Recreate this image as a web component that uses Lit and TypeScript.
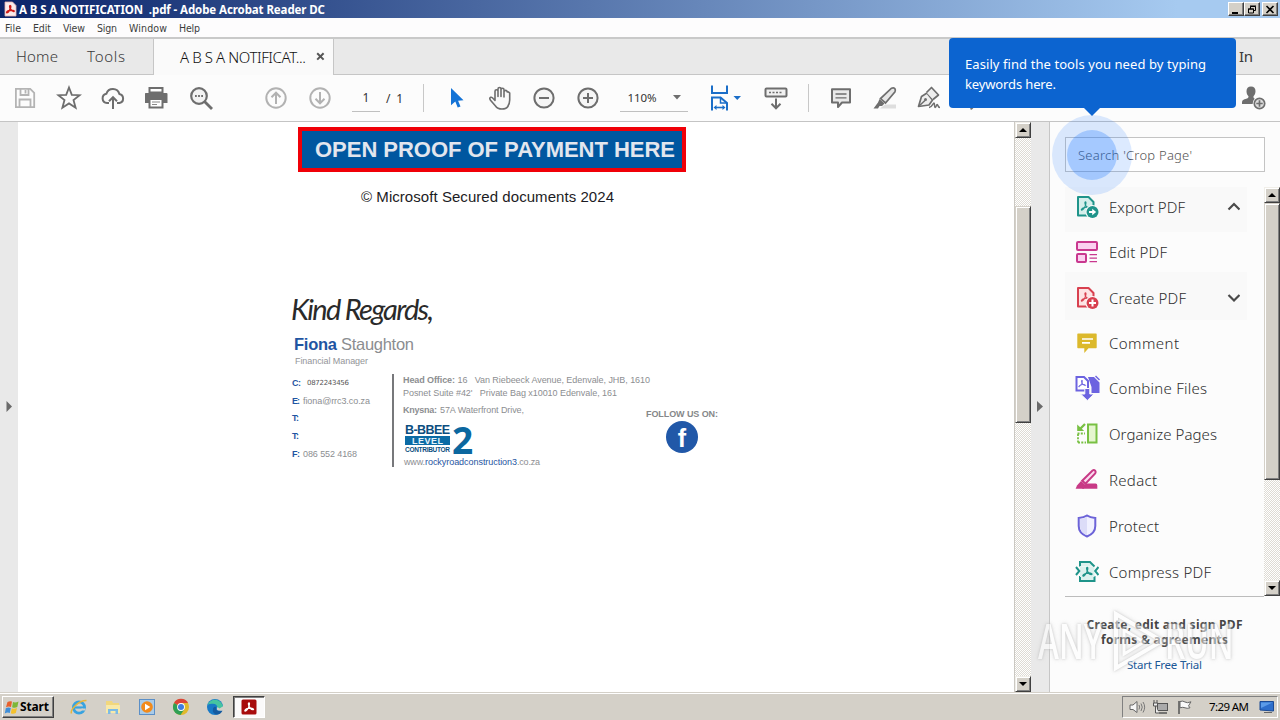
import { LitElement, html, css, svg } from "lit";
import { customElement, property } from "lit/decorators.js";

/** Single-line label whose tracking is spread so that it takes a given width. */
@customElement("fit-label")
class FitLabel extends LitElement {
  @property({ type: Number }) w = 0;
  @property() text = "";
  static styles = css`
    :host { display: inline-block; white-space: pre; flex: none; }
  `;
  render() {
    return html`<span>${this.text}</span>`;
  }
  updated() {
    const s = this.renderRoot.querySelector("span") as HTMLElement;
    s.style.letterSpacing = "0px";
    if (!this.w) return;
    const gap = (this.w - s.getBoundingClientRect().width) / Math.max(1, this.text.length - 1);
    s.style.letterSpacing = gap.toFixed(3) + "px";
    s.style.marginRight = (-gap).toFixed(3) + "px";
  }
}

const L = (text: string, w = 0, cls = "") => html`<fit-label class=${cls} .text=${text} .w=${w}></fit-label>`;

const ic = (w: number, h: number, body: unknown, cls = "") =>
  html`<svg class="ic ${cls}" width=${w} height=${h} viewBox="0 0 ${w} ${h}">${body}</svg>`;

const trefoil = (x: number, y: number, k: number, color: string, sw = 1.2) => svg`
  <g transform="translate(${x} ${y}) scale(${k})" fill="none" stroke=${color} stroke-width=${sw} stroke-linejoin="round">
    <path d="M5 0.8C4 0.8 4.4 3.2 5.2 4.6C6.2 6.4 8 7.8 9.3 7.6C10.3 7.2 8.6 6 6.2 6.2C4 6.3 1.2 7.4 0.8 8.7C0.9 9.9 3 8.6 4.3 6C5.3 4 6 0.9 5 0.8Z"/>
  </g>`;

const tb = {
  save: ic(24, 24, svg`<g fill="none" stroke="#b4b4b4" stroke-width="1.8"><path d="M2.9 2.9h14.3l4 4v14.3H2.9z"/><path d="M7.5 3v6h8V3M6.5 21v-7.500h11V21M12.500 4v3.500"/></g>`),
  star: ic(26, 26, svg`<path d="M13 2.500l2.800 7.300 7.800.4-6.100 4.900 2.100 7.600L13 18.400l-6.600 4.300 2.100-7.600-6.100-4.900 7.800-.4z" fill="none" stroke="#6e6e6e" stroke-width="1.800"/>`),
  cloud: ic(26, 26, svg`<g fill="none" stroke="#6e6e6e" stroke-width="2"><path d="M9 18H7a4.700 4.700 0 0 1-.6-9.300A6.800 6.800 0 0 1 19.400 9 4.600 4.600 0 0 1 19.500 18H17"/><path d="M13 24V12.500M9 16.200l4-4 4 4"/></g>`),
  print: ic(26, 26, svg`<path d="M5.500 3h13v4.500h-13z" fill="#fff" stroke="#6e6e6e" stroke-width="2"/><path d="M1.500 8h21q1 0 1 1v9h-4.500v-3.500h-14V18H1V9q0-1 .5-1z" fill="#6e6e6e"/><path d="M5.500 14h13V22.500h-13z" fill="#fff" stroke="#6e6e6e" stroke-width="2"/><path d="M8 17h8M8 19.500h5" stroke="#8a8a8a"/>`),
  find: ic(26, 26, svg`<circle cx="11" cy="11" r="7.800" fill="#f3f3f3" stroke="#6e6e6e" stroke-width="2.200"/><path d="M16.500 16.500l7.500 7.500" stroke="#6e6e6e" stroke-width="2.800"/><path d="M7 11h1.800M10.100 11h1.800M13.200 11h1.800" stroke="#6e6e6e" stroke-width="2"/>`),
  up: ic(24, 24, svg`<g fill="none" stroke="#b2b2b2" stroke-width="2"><circle cx="12" cy="12" r="9.700"/><path d="M12 18V7M7.500 11.200L12 6.700l4.500 4.500"/></g>`),
  down: ic(24, 24, svg`<g fill="none" stroke="#b2b2b2" stroke-width="2"><circle cx="12" cy="12" r="9.700"/><path d="M12 6v11M7.500 12.800l4.500 4.500 4.500-4.500"/></g>`),
  cursor: ic(24, 24, svg`<path d="M7 2v17.200l4.300-3.600 2.400 5.900 2.800-1-2.400-5.800 5.400-.5z" fill="#1473d6"/>`),
  hand: ic(26, 26, svg`<path d="M8 15.500V6.300a1.500 1.500 0 0 1 3 0V11.500V4a1.500 1.500 0 0 1 3 0V11.500V4.700a1.500 1.500 0 0 1 3 0V12V7a1.500 1.500 0 0 1 3.200 0q1.200-.6 2.500 1V15q0 4-2.200 7-1.500 2-5.500 2-4.500 0-6.500-3L3.500 15.200Q2 13 3.700 12.300q1.300-.4 2.500 1.200z" fill="#fafafa" stroke="#6e6e6e" stroke-width="1.600" stroke-linejoin="round"/>`),
  minus: ic(24, 24, svg`<circle cx="12" cy="12" r="9.600" fill="#f6f6f6" stroke="#6e6e6e" stroke-width="2"/><path d="M7 12h10" stroke="#6e6e6e" stroke-width="2"/>`),
  plus: ic(24, 24, svg`<circle cx="12" cy="12" r="9.600" fill="#f6f6f6" stroke="#6e6e6e" stroke-width="2"/><path d="M7 12h10M12 7v10" stroke="#6e6e6e" stroke-width="2"/>`),
  fit: ic(36, 26, svg`<g fill="none" stroke="#1b6ec8" stroke-width="2"><path d="M5 0.500V8h15V0.500"/><path d="M5 25.500V12.500h8.500L20 18v7.500"/><path d="M13.500 12.500V18H20" stroke-width="1.500"/><path d="M8 22.500h9" stroke-width="1.600"/></g><path d="M6.500 22.500l3-2.500v5zM18.500 22.500l-3-2.500v5z" fill="#1b6ec8"/><path d="M26.500 11h7.500l-3.750 4z" fill="#1b6ec8"/>`),
  keys: ic(26, 26, svg`<rect x="2.500" y="3.500" width="21" height="8" rx="1" fill="#f1f1f1" stroke="#6e6e6e" stroke-width="2"/><path d="M6 7.500h2M9.500 7.500h2M13 7.500h2M16.500 7.500h2" stroke="#6e6e6e" stroke-width="1.600"/><path d="M13 13.500V23M8.500 18.800l4.500 4.500 4.500-4.500" fill="none" stroke="#6e6e6e" stroke-width="2"/>`),
  note: ic(24, 24, svg`<path d="M3 3.200h18v13.300h-8l-4 4.500v-4.500H3z" fill="#e9e9e9" stroke="#6e6e6e" stroke-width="2" stroke-linejoin="round"/><path d="M6.500 8h11M6.500 11.800h11" stroke="#6e6e6e" stroke-width="1.300"/>`),
  marker: ic(26, 26, svg`<path d="M13 19.500h11v4H8z" fill="#dedede"/><path d="M19.500 3.200q2-1 3.300.3 1 1.500.2 3.200L13.500 18l-5-4.400z" fill="#e6e6e6" stroke="#6e6e6e" stroke-width="1.700"/><path d="M7.500 14l5 4.500-2.500 2.500H7.500L6 23.500H1.500L6 17.500z" fill="#6e6e6e"/>`),
  sign: ic(26, 26, svg`<path d="M2.500 21.500L5.500 11.500 11 8l5.500 7-3.500 5z" fill="#eee" stroke="#6e6e6e" stroke-width="1.700" stroke-linejoin="round"/><path d="M10.500 7.500l5-5 7 7.500-5.500 4.500" fill="#eee" stroke="#6e6e6e" stroke-width="1.700" stroke-linejoin="round"/><path d="M2.500 21.500l6.500-6" stroke="#6e6e6e" stroke-width="1.500"/><circle cx="9.500" cy="14.500" r="1.500" fill="#6e6e6e"/><path d="M13 22.500c3 0 4-4.500 5-4.500s0 4.500 1.200 4.500 1-3 2-3 .3 3 2.800 3" fill="none" stroke="#6e6e6e" stroke-width="1.500"/>`),
  more: ic(26, 26, svg`<path d="M13 4v17q0 2-2.500 3" fill="none" stroke="#6e6e6e" stroke-width="2"/>`),
  person: ic(28, 26, svg`<path d="M10 1.500c3 0 4.500 2 4.500 4.800 0 2-.9 4-2 5 0 2 .3 2.200 3.500 3.500v4.200H1c0-3.500.5-4 3.500-4.900 2.500-.7 3-1.200 3-2.800-1.200-1-2-3-2-5C5.500 3.500 7 1.500 10 1.500z" fill="#6e6e6e"/><circle cx="18.500" cy="18.500" r="6.800" fill="#fafafa"/><circle cx="18.500" cy="18.500" r="5.200" fill="#ddd" stroke="#6e6e6e" stroke-width="1.700"/><path d="M15.300 18.500h6.400M18.500 15.300v6.400" stroke="#6e6e6e" stroke-width="1.700"/>`),
};

const page = (c: string, f: string, badge: unknown) =>
  ic(24, 26, svg`<path d="M3 3h10.500l5 5V21.500H3z" fill=${f} stroke=${c} stroke-width="2" stroke-linejoin="round"/>${trefoil(5.5, 7, 1, c, 1.1)}<circle cx="17.500" cy="18" r="7" fill="#fafafa"/><circle cx="17.500" cy="18" r="6" fill=${c}/>${badge}`);

const tools = [
  { n: "Export PDF", w: 76, open: "up", i: page("#1f948a", "#d5efeb", svg`<path d="M14 18h4" stroke="#fff" stroke-width="2"/><path d="M17.200 14.800l4 3.200-4 3.200z" fill="#fff"/>`) },
  { n: "Edit PDF", w: 58, i: ic(24, 26, svg`<g fill="#fbd0f0" stroke="#c9388f" stroke-width="2"><rect x="2" y="3" width="20" height="8" rx="1"/><rect x="2" y="15" width="9" height="8" rx="1"/></g><path d="M14.500 15.700H22M14.500 19.200H22M14.500 22.700H22" stroke="#c9388f" stroke-width="1.300"/>`) },
  { n: "Create PDF", w: 77, open: "down", i: page("#d8404f", "#fde3e3", svg`<path d="M14 18h7M17.500 14.500v7" stroke="#fff" stroke-width="2"/>`) },
  { n: "Comment", w: 70, i: ic(24, 26, svg`<path d="M3 3.500h18q.7 0 .7.700v13.300q0 .7-.7.700h-7.500L9.300 23v-4.800H3q-.7 0-.7-.7V4.200q0-.7.7-.7z" fill="#dcb92c"/><path d="M7 9h11M7 12.800h8" stroke="#fff" stroke-width="1.700"/>`) },
  { n: "Combine Files", w: 98, i: ic(26, 26, svg`<path d="M13 2h6l5.500 5.500V18h-8v-6z" fill="#6c63e0"/><path d="M20.500 1l4 4" stroke="#6c63e0" stroke-width="1.500"/><path d="M1.500 2h7.500l4 4v9.500H1.500z" fill="#fff" stroke="#6c63e0" stroke-width="2"/>${trefoil(3, 4.500, 0.800, "#6c63e0", 1.200)}<path d="M9.800 13.500h5V19h4.200l-6.700 6.500L5.600 19h4.200z" fill="#6c63e0" stroke="#fafafa" stroke-width="1"/>`) },
  { n: "Organize Pages", w: 108, i: ic(24, 26, svg`<rect x="13" y="3.500" width="8.500" height="18" fill="#e5f6cf" stroke="#78c043" stroke-width="2"/><path d="M2.500 12.500H10M3 13v8.500M3 21.500H11" stroke="#78c043" stroke-width="1.800" stroke-dasharray="2 1.300" fill="none"/><path d="M10 3l-5 5" stroke="#78c043" stroke-width="2.300"/><path d="M2.200 3.500v6.500h7z" fill="#78c043"/>`) },
  { n: "Redact", w: 48, i: ic(24, 26, svg`<path d="M11 16.500h9.500q1.800 0 1.800 2v3.300H7z" fill="#c83a86"/><path d="M17.500 3.500q1.500-.9 2.700.2 1 1.300 0 2.700L10.500 16.600l-3.300-2.800z" fill="#fbdcf0" stroke="#c83a86" stroke-width="2"/><path d="M6 14l4.500 4-1.700 3.800H0.600L2 18.500z" fill="#c83a86"/>`) },
  { n: "Protect", w: 50, i: ic(24, 26, svg`<path d="M12 2.500c2.500 1.800 5 2.300 8.300 2.500V13c0 5-3.300 8.500-8.300 10.500C7 21.500 3.700 18 3.700 13V5C7 4.800 9.500 4.300 12 2.500z" fill="#f1f1ff" stroke="#6c63d8" stroke-width="2"/><path d="M12 4c-2 1.300-4.300 1.800-7 2V13c0 4 2.500 7.300 7 9.300z" fill="#dcdcf8"/>`) },
  { n: "Compress PDF", w: 102, i: ic(24, 26, svg`<path d="M5 7.500V3h10l4.500 4.500M5 17v5h14.500v-5" fill="#dcf1ee" stroke="#1f948a" stroke-width="2"/><path d="M5 7h1.500v11H5zM6 7l13.500 1v10H6z" fill="#dcf1ee"/>${trefoil(7, 7.500, 1.050, "#1f948a", 1.200)}<path d="M1 8l3.300 4L1 16M23.500 8l-3.300 4 3.300 4" fill="none" stroke="#1f948a" stroke-width="2"/>`) },
];

const sbArrow = (dir: string) =>
  html`<div class="sbb">${ic(8, 4, dir === "up" ? svg`<path d="M0 4h8L4 0z"/>` : svg`<path d="M0 0h8L4 4z"/>`)}</div>`;

@customElement("app-root")
class AppRoot extends LitElement {
  static styles = css`
    :host { display: block; width: 1280px; height: 720px; overflow: hidden; position: relative; background: #fafafa;
      font-family: "Noto Sans", "Open Sans", sans-serif; color: #333; }
    * { box-sizing: border-box; }
    .app { display: flex; flex-direction: column; height: 720px; }
    .ic { display: block; flex: none; }
    .row { display: flex; align-items: center; }

    .title { height: 18px; background: linear-gradient(90deg, #0a246a, #a6caf0 92%); color: #fff; padding: 0 2px 0 3px;
      font: bold 11.500px/17px "Noto Sans", sans-serif; gap: 2px; }
    .grow { flex: 1; }
    .winbtn { width: 16px; height: 14px; background: #d4d0c8; border: 1px solid; border-color: #fff #404040 #404040 #fff;
      box-shadow: inset -1px -1px #808080; display: grid; place-items: center; }
    .winbtn.mid { margin-left: -2px; }

    .menu { height: 19px; background: #fdfcfd; font: 10.500px/19px "DejaVu Sans Condensed", "Noto Sans", sans-serif; padding: 2px 0 0 5px; gap: 12px; color: #3c3c3c; }
    .tabs { height: 38px; background: #e9e9e9; border-top: 2px solid #c9c9c9; border-bottom: 1px solid #c6c6c6; display: flex; align-items: stretch;
      font-weight: 300; font-size: 15px; line-height: 35px; color: #3a3a3a; }
    .tabs .home { padding-left: 16px; width: 87px; }
    .tabs .tools { width: 67px; border-right: 1px solid #c6c6c6; }
    .tab { display: flex; width: 180px; background: #fafafa; margin-bottom: -1px; border-right: 1px solid #c6c6c6; padding: 0 0 0 26px; align-items: center; gap: 10px; }
    .tab .ttl { color: #111; }
    .tab .ic { margin-bottom: 1px; }
    .signin { padding-right: 27px; font-weight: 400; }

    .bar { height: 47px; background: #fcfcfc; border-bottom: 1px solid #c4c4c4; padding: 0 0 0 3px; font-size: 12px; }
    .cell { width: 44px; display: grid; place-items: center; flex: none; }
    .g31 { width: 31px; flex: none; }
    .field { height: 28px; border-bottom: 1px solid #c0c0c0; display: flex; align-items: center; justify-content: center; flex: none; }
    .pg { width: 28px; margin-left: 10px; }
    .of { margin-left: 6px; width: 17px; }
    .sep { width: 1px; height: 28px; background: #c8c8c8; flex: none; }
    .s1 { margin: 0 10px 0 20px; }
    .s2 { margin: 0 10px 0 10px; }
    .zoom { width: 68px; margin: 0 19px 0 10px; gap: 16px; font-size: 11.500px; }
    .fitc { width: 36px; margin-right: 11px; }
    .person { margin-right: 11px; }

    .main { height: 571px; flex: none; display: flex; }
    .ls, .rs { width: 18px; background: #e9e9e9; display: grid; place-items: center; padding-bottom: 2px; }
    .sb { width: 17px; flex: none; display: flex; flex-direction: column; border-left: 1px solid #cbc8c2;
      background: conic-gradient(#fff 25%, #dedbd4 0 50%, #fff 0 75%, #dedbd4 0) 0 0/2px 2px; }
    .sbb { height: 16px; background: #d4d0c8; border: 1px solid; border-color: #f1efe9 #404040 #404040 #f1efe9;
      box-shadow: inset 1px 1px #fff, inset -1px -1px #808080; display: grid; place-items: center; flex: none; }
    .thumb { background: #d4d0c8; border: 1px solid; border-color: #d4d0c8 #404040 #404040 #d4d0c8; box-shadow: inset 1px 1px #fff, inset -1px -1px #808080; }
    .doc-sb { padding-bottom: 1px; }
    .doc-thumb { margin-top: 68px; height: 217px; }
    .panel-thumb { height: 277px; }

    .doc { width: 996px; background: #fff; font-family: "Liberation Sans", Arial, sans-serif; padding: 5px 0 0 272px; }
    .cta { margin-left: 8px; width: 388px; height: 45px; background: #0057a0; border: 4px solid #f00008; color: #e2e6ee; font-weight: bold; font-size: 22px; line-height: 37px; padding-left: 13px; }
    .cap { margin: 16px 0 0 71px; font-size: 15px; line-height: 18px; color: #1c1c24; }
    .script { margin: 79px 0 0 1px; height: 46px; font: italic 400 29px/48px Lato, cursive; color: #2a2a2a; }
    .name { margin: 3px 0 0 4px; font-size: 16.500px; line-height: 20px; color: #8b8d90; gap: 4px; }
    .blue { color: #1f55a2; }
    .b { font-weight: bold; }
    .role { margin: 1px 0 0 5px; font-size: 9px; line-height: 12px; color: #939598; }
    .info { display: flex; margin-top: 7px; font-size: 9px; color: #8c8e91; height: 94px; }
    .c1 { width: 104px; height: 93px; border-right: 2px solid #77787b; padding-left: 2px; }
    .c1 .row { height: 17.700px; gap: 3px; }
    .c1 .num { font-family: "DejaVu Sans"; font-size: 7px; color: #555; padding-left: 3px; }
    .c2 { width: 251px; padding-left: 9px; line-height: 12px; }
    .c2 .row { height: 12.500px; }
    .c2 .kn { margin: 5px 0 7px; gap: 3px; }
    .bbbee { display: flex; gap: 2px; height: 32px; color: #0b4e80; margin-left: 2px; }
    .bb { display: flex; flex-direction: column; width: 45px; }
    .bb1 { font: bold 12.500px/12px "Liberation Sans"; height: 12px; }
    .bb2 { background: #0b6ba5; color: #e8f4fa; font: bold 9px/10px "Liberation Sans"; text-align: center; height: 9px; }
    .bb3 { font: bold 6.500px/8px "Liberation Sans"; margin-top: 1px; }
    .two { font: bold 37px/31px "Open Sans", sans-serif; color: #0b679f; }
    .url { margin-left: 1px; }
    .follow { padding-top: 34px; width: 74px; display: flex; flex-direction: column; align-items: center; }
    .follow .cap2 { line-height: 13px; color: #858789; }
    .fb { width: 32px; height: 32px; border-radius: 50%; background: #2158a8; color: #fff; text-align: center; font: bold 25px/34px "Liberation Sans", sans-serif; }

    .panel { width: 231px; border-left: 1px solid #c6c6c6; padding-left: 15px; background: #fcfcfc; }
    .search { margin-top: 15px; width: 200px; height: 35px; border: 1px solid #c4c4c4; background: #fff; font-size: 13px; font-weight: 300; color: #555; line-height: 34px; padding-left: 12px; }
    .lists { display: flex; margin-top: 15px; height: 410px; }
    .list { width: 199px; border-bottom: 1px solid #bcbcbc; overflow: hidden; }
    .tool { width: 182px; height: 46px; padding-left: 10px; gap: 8px; font-size: 15px; font-weight: 300; line-height: 20px; color: #2e2e2e; }
    .tool .ic:first-child { margin-right: 2px; }
    .tool .ic[width="26"] { margin-right: 0; }
    .tool .lab { width: 109px; }
    .t0 { height: 45px; padding-bottom: 5px; }
    .t1 { height: 40px; }
    .t2 { height: 48px; padding-top: 3px; }
    .t3 { height: 45px; }
    .shade { background: #f9f9f9; }
    .sb.ps { width: 16px; height: 409px; border-left: 0; }
    .foot { width: 199px; display: flex; flex-direction: column; align-items: center; padding-top: 20px; font: bold 12px/15px "Noto Sans"; color: #444; }
    .trial { margin-top: 10px; font-weight: 400; font-size: 11.500px; color: #1a5796; }

    .tip { position: absolute; left: 949px; top: 38px; width: 287px; height: 70px; background: #0c64d0; border-radius: 4px; color: #fff; padding: 16px; font-size: 13px; line-height: 20px; display: flex; flex-direction: column; align-items: flex-start; }
    .tipa { position: absolute; left: 1083px; top: 107px; }
    .halo { position: absolute; left: 1052px; top: 115px; width: 80px; height: 80px; border-radius: 50%; background: rgba(20, 115, 255, .15); }
    .dot { position: absolute; left: 1067px; top: 130px; width: 50px; height: 50px; border-radius: 50%; background: rgba(20, 115, 255, .27); }
    .wm { position: absolute; left: 1038px; top: 607px; display: flex; align-items: center; opacity: .55; color: #fff; height: 68px;
      font: 600 48px/68px "Open Sans"; filter: drop-shadow(0 0 1px #aaa) drop-shadow(0 0 2px #ccc); }
    .any { width: 66px; } .run { width: 64px; margin-left: -5px; }
    .sq { display: block; transform: scaleX(.66); transform-origin: 0 50%; white-space: pre; }

    .task { height: 27px; background: #d4d0c8; border-top: 1px solid #fff; box-shadow: 0 -1px #d4d0c8; padding: 0 2px 1px 2px; }
    .start { width: 52px; height: 22px; border: 1px solid; border-color: #fff #404040 #404040 #fff; box-shadow: inset -1px -1px #808080; padding-left: 1px; font: bold 12px/18px "Noto Sans"; color: #000; gap: 0; margin-right: 8px; }
    .q { width: 34px; display: grid; place-items: center; }
    .q.on { width: 32px; height: 22px; background: #fbfafa; border: 1px solid; border-color: #404040 #fff #fff #404040; margin-left: 1px; box-shadow: inset 1px 1px #808080; }
    .tray { width: 156px; height: 22px; border: 1px solid; border-color: #808080 #fff #fff #808080; padding-left: 5px; color: #000; font: 11.500px/20px "Noto Sans"; }
    .tray .ic { margin-right: 6px; }
    .tray .mon { margin: 0 0 0 10px; }
    .clock { margin-left: 9px; }
  `;

  render() {
    return html`
      <div class="app">
        <div class="title row">
          ${ic(14, 16, svg`<path d="M2 1h7.500L13 4.500V15H2z" fill="#fbeceb" stroke="#e9b4b0" stroke-width=".8"/>${trefoil(3, 4, 0.850, "#d01b16", 1.900)}`)}
          ${L("A B S A NOTIFICATION  .pdf - Adobe Acrobat Reader DC", 306)}
          <span class="grow"></span>
          <div class="winbtn">${ic(10, 9, svg`<path d="M1 7h6v2H1z"/>`)}</div>
          <div class="winbtn mid">${ic(10, 9, svg`<path d="M3.500 4V1.500h5v4H7M3 1h6" fill="none" stroke="#000"/><path d="M1.500 4h5v4h-5zM1 4h6" fill="none" stroke="#000"/>`)}</div>
          <div class="winbtn">${ic(10, 9, svg`<path d="M1.500 1l7 7M8.500 1l-7 7" stroke="#000" stroke-width="1.600"/>`)}</div>
        </div>
        <div class="menu row">
          ${L("File", 16)}${L("Edit", 18)}${L("View", 22)}${L("Sign", 20)}${L("Window", 38)}${L("Help", 21)}
        </div>
        <div class="tabs">
          <div class="home">${L("Home", 42)}</div>
          <div class="tools">${L("Tools", 38)}</div>
          <div class="tab">${L("A B S A NOTIFICAT...", 126, "ttl")}${ic(9, 9, svg`<path d="M1.200 1.200l6.400 6.400M7.600 1.200L1.200 7.600" stroke="#555" stroke-width="2"/>`)}</div>
          <span class="grow"></span>
          <div class="signin">${L("Sign In", 46)}</div>
        </div>
        <div class="bar row">
          ${[tb.save, tb.star, tb.cloud, tb.print, tb.find].map((i) => html`<div class="cell">${i}</div>`)}
          <span class="g31"></span>
          <div class="cell">${tb.up}</div><div class="cell">${tb.down}</div>
          <div class="field pg">1</div><div class="of">${L("/ 1", 17)}</div>
          <span class="sep s1"></span>
          ${[tb.cursor, tb.hand, tb.minus, tb.plus].map((i) => html`<div class="cell">${i}</div>`)}
          <div class="field zoom">${L("110%", 29)}${ic(8, 5, svg`<path d="M0 0h8L4 4.500z" fill="#6e6e6e"/>`)}</div>
          <div class="fitc">${tb.fit}</div>
          <div class="cell">${tb.keys}</div>
          <span class="sep s2"></span>
          ${[tb.note, tb.marker, tb.sign, tb.more].map((i) => html`<div class="cell">${i}</div>`)}
          <span class="grow"></span>
          <div class="person">${tb.person}</div>
        </div>
        <div class="main">
          <div class="ls">${ic(7, 11, svg`<path d="M0.500 0v11L6 5.500z" fill="#6a6a6a"/>`)}</div>
          <div class="doc">
            <div class="cta">${L("OPEN PROOF OF PAYMENT HERE", 360)}</div>
            <div class="cap">${L("© Microsoft Secured documents 2024", 253)}</div>
            <div class="script">${L("Kind Regards,", 143)}</div>
            <div class="name row">${L("Fiona", 43, "b blue")}${L("Staughton", 73)}</div>
            <div class="role">${L("Financial Manager", 73)}</div>
            <div class="info">
              <div class="c1">
                <div class="row">${L("C:", 9, "b blue")}${L("0872243456", 42, "num")}</div>
                <div class="row">${L("E:", 8, "b blue")}${L("fiona@rrc3.co.za", 67)}</div>
                <div class="row">${L("T:", 7, "b blue")}</div>
                <div class="row">${L("T:", 7, "b blue")}</div>
                <div class="row">${L("F:", 8, "b blue")}${L("086 552 4168", 54)}</div>
              </div>
              <div class="c2">
                <div class="row">${L("Head Office:", 52, "b")}${L(" 16   Van Riebeeck Avenue, Edenvale, JHB, 1610", 195)}</div>
                <div class="row">${L("Posnet Suite #42'   Private Bag x10010 Edenvale, 161", 214)}</div>
                <div class="row kn">${L("Knysna:", 34, "b")}${L("57A Waterfront Drive,", 84)}</div>
                <div class="bbbee">
                  <div class="bb">
                    <div class="bb1">${L("B-BBEE", 45)}</div>
                    <div class="bb2">${L("LEVEL", 31)}</div>
                    <div class="bb3">${L("CONTRIBUTOR", 45)}</div>
                  </div>
                  <div class="two">2</div>
                </div>
                <div class="row url">${L("www.", 21)}${L("rockyroadconstruction3", 92, "blue")}${L(".co.za", 23)}</div>
              </div>
              <div class="follow"><div class="cap2">${L("FOLLOW US ON:", 72, "b")}</div><div class="fb">f</div></div>
            </div>
          </div>
          <div class="sb doc-sb">${sbArrow("up")}<div class="thumb doc-thumb"></div><span class="grow"></span>${sbArrow("down")}</div>
          <div class="rs">${ic(7, 11, svg`<path d="M0 0v11L6 5.500z" fill="#6a6a6a"/>`)}</div>
          <div class="panel">
            <div class="search">${L("Search 'Crop Page'", 114)}</div>
            <div class="lists">
              <div class="list">
                ${tools.map((t, k) => html`<div class="tool row t${k} ${t.open ? "shade" : ""}">${t.i}<div class="lab">${L(t.n, t.w)}</div>
                  ${t.open ? ic(14, 10, t.open === "up" ? svg`<path d="M2.500 7.500L8 2l5.500 5.500" fill="none" stroke="#4a4a4a" stroke-width="2.200"/>` : svg`<path d="M2.500 2L8 7.500 13.500 2" fill="none" stroke="#4a4a4a" stroke-width="2.200"/>`) : ""}</div>`)}
              </div>
              <div class="sb ps">${sbArrow("up")}<div class="thumb panel-thumb"></div><span class="grow"></span>${sbArrow("down")}</div>
            </div>
            <div class="foot">${L("Create, edit and sign PDF", 156)}${L("forms & agreements", 127)}${L("Start Free Trial", 75, "trial")}</div>
          </div>
        </div>
        <div class="task row">
          <div class="start row">${ic(16, 16, svg`<path d="M3.500 3q2.500-1.500 4.500-.4L7 8Q4.500 7 2 8.300z" fill="#e8602c"/><path d="M9 3q2.500 1 5.500-.6L13.300 8q-2.500 1.400-5.200.2z" fill="#7db738"/><path d="M1.800 9.200Q4.300 8 6.800 9l-1 5q-2.300-1-5 .4z" fill="#3f8ed8"/><path d="M7.800 9.200q2.500 1.200 5.200-.1l-1.200 5q-2.500 1.400-5 .2z" fill="#f4c12d"/>`)}${L("Start", 29)}</div>
          <div class="q">${ic(18, 18, svg`<circle cx="9" cy="9.500" r="5.600" fill="none" stroke="#38a3e0" stroke-width="2.800"/><path d="M4.500 9.500h10" stroke="#38a3e0" stroke-width="2.200"/><path d="M11.500 11.500h4" stroke="#d4d0c8" stroke-width="2"/><path d="M1.500 15.500C0 12 8 2.500 16.500 2.500" fill="none" stroke="#e7b63b" stroke-width="1.500"/>`)}</div>
          <div class="q">${ic(18, 18, svg`<path d="M2 3h6l1 2h6v9H2z" fill="#f1d77d"/><path d="M2 7h14v8H2z" fill="#f8e9a8"/><path d="M4 16v-5h10v5h-2.500v-3h-5v3z" fill="#7cbbe5"/>`)}</div>
          <div class="q">${ic(18, 18, svg`<rect x="1.500" y="1.500" width="15" height="15" fill="#a9cbe8" stroke="#5b8fc7"/><circle cx="9" cy="9" r="5.800" fill="#f28a1b"/><path d="M7 5.800v6.400L12.300 9z" fill="#fff"/>`)}</div>
          <div class="q">${ic(18, 18, svg`<circle cx="9" cy="9" r="8" fill="#e1b92c"/><path d="M9 9L2 5A8 8 0 0 1 16 5H9z" fill="#dc4437"/><path d="M9 9L2 5A8 8 0 0 0 8.500 17L12.500 11z" fill="#2f9f55"/><circle cx="9" cy="9" r="3.900" fill="#fff"/><circle cx="9" cy="9" r="3" fill="#3f7de0"/>`)}</div>
          <div class="q">${ic(18, 18, svg`<circle cx="9" cy="9" r="8" fill="#1879c6"/><path d="M1.500 7A8 8 0 0 1 17 9.500q-.5 2.500-3.500 2.500-3 0-2-2.500Q11 6 7 5.800 3.500 5.500 1.500 7z" fill="#46c4a0"/><path d="M17.500 8v5l-5.500-.5q-2-1-.5-3.500l2 1.500z" fill="#d4d0c8"/><path d="M10 11.500q1.500 2.500 6.500 1.200Q14 17 10 16.500 6 15 7 10.500q1-2.500 3-1.500z" fill="#155a9f"/>`)}</div>
          <div class="q on">${ic(16, 16, svg`<rect x=".5" y=".5" width="15" height="15" rx="1.500" fill="#a80c0c"/>${trefoil(3, 3, 1, "#fff", 1.200)}`)}</div>
          <span class="grow"></span>
          <div class="tray row">
            ${ic(18, 16, svg`<path d="M2 6h3l4-3.500v11L5 10.500H2z" fill="#f6f6f6" stroke="#666"/><path d="M11 6q1.300 2 0 4.500M13 4.500q2.500 3.500 0 7.500M15 3q3.300 5 0 10.500" fill="none" stroke="#777"/>`)}
            ${ic(18, 16, svg`<rect x="5.500" y="4.500" width="10" height="7" fill="#aaa" stroke="#555"/><path d="M7 14h8" stroke="#555" stroke-width="1.500"/><path d="M2 1v3M5 1v3M1.500 4h4v3h-4zM3.500 7v7H7" fill="#eee" stroke="#555"/>`)}
            ${ic(18, 16, svg`<path d="M3 2v13" stroke="#555" stroke-width="1.500"/><path d="M4 2.500q3-1 5 .5t6-.2l-2.500 4 1.500 2q-3 1-5 0t-5 0z" fill="#fafafa" stroke="#666"/>`)}
            <div class="clock">${L("7:29 AM", 40)}</div>
            ${ic(16, 14, svg`<path d="M1 1.500h13.500V11L1 10z" fill="#2d6ecb" stroke="#1b4a94"/><path d="M2 2.500h11.500L2 8z" fill="#5b9be8"/><path d="M5 12.500h8" stroke="#666"/>`, "mon")}
          </div>
        </div>
      </div>
      <div class="halo"></div><div class="dot"></div>
      <div class="tip">${L("Easily find the tools you need by typing", 241)}${L("keywords here.", 91)}</div>
      ${ic(18, 10, svg`<path d="M0 0h18L9 9z" fill="#0c64d0"/>`, "tipa")}
      <div class="wm"><div class="any"><span class="sq">ANY</span></div>${ic(66, 68, svg`<path d="M12 7L58 34 12 61z" fill="none" stroke="#fff" stroke-width="4"/><path d="M20 23L40 35 20 47z" fill="none" stroke="#fff" stroke-width="3"/>`)}<div class="run"><span class="sq">RUN</span></div></div>
    `;
  }
}
